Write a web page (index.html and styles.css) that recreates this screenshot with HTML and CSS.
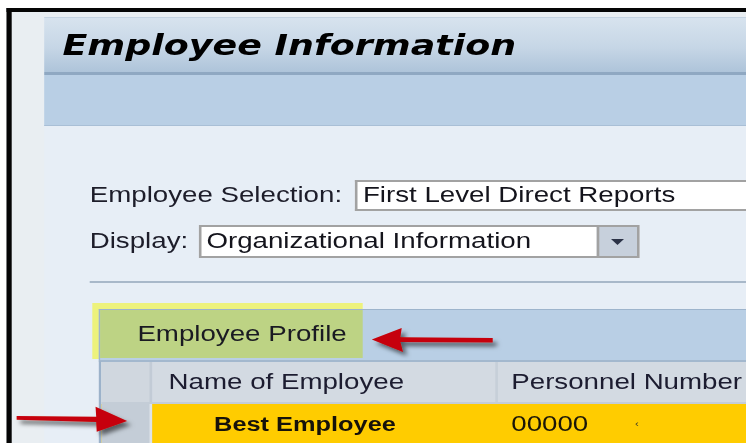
FILE: index.html
```html
<!DOCTYPE html>
<html lang="en">
<head>
<meta charset="utf-8">
<title>Employee Information</title>
<link rel="stylesheet" href="styles.css">
</head>
<body>
<div class="screen">
  <div class="frame">
    <div class="panel">
      <div class="titlebar"><h1 class="title">Employee Information</h1></div>
      <div class="toolbar"></div>
      <div class="content">
        <div class="field-row">
          <span class="label">Employee Selection:</span>
          <div class="textbox">First Level Direct Reports</div>
        </div>
        <div class="field-row row-display">
          <span class="label">Display:</span>
          <div class="dropdown">
            <span class="dropdown-value">Organizational Information</span>
            <span class="dropdown-button">
              <svg class="caret" width="10" height="6" viewBox="0 0 10 6"><polygon points="0,0 10,0 5,6"/></svg>
            </span>
          </div>
        </div>
        <div class="divider"></div>
        <section class="profile">
          <div class="highlight"></div>
          <div class="profile-bar"><span class="profile-title">Employee Profile</span></div>
          <div class="grid">
            <div class="grid-head">
              <div class="cell selector"></div>
              <div class="cell col-name">Name of Employee</div>
              <div class="cell col-number">Personnel Number</div>
            </div>
            <div class="grid-row selected">
              <div class="cell selector"></div>
              <div class="cell col-name name-value">Best Employee</div>
              <div class="cell col-number">00000<span class="trail">‹</span></div>
            </div>
          </div>
        </section>
      </div>
    </div>
  </div>
  <svg class="callouts" width="574" height="443" viewBox="0 0 574 443">
    <defs>
      <filter id="arrow-shadow" x="-20%" y="-50%" width="140%" height="250%">
        <feDropShadow dx="3" dy="4" stdDeviation="2.2" flood-color="#000" flood-opacity="0.55"/>
      </filter>
    </defs>
    <polygon class="arrow" filter="url(#arrow-shadow)"
      points="286,339.5 309,328 308,337.2 379,338 379,342.6 308,342 310,352"/>
    <polygon class="arrow" filter="url(#arrow-shadow)"
      points="12.8,416 74,416.8 73.5,406.7 97.8,421 74.4,431.7 74,422 12.8,419.8"/>
  </svg>
</div>
</body>
</html>
```
FILE: styles.css
```css
html, body {
  margin: 0;
  height: 100%;
  overflow: hidden;
  background: #ffffff;
}

/* The whole window is drawn in a narrower box and widened horizontally */
.screen {
  position: relative;
  width: 574px;
  height: 443px;
  box-sizing: border-box;
  padding: 8px 0 0 5px;
  transform: scaleX(1.3);
  transform-origin: 0 0;
  font-family: "Liberation Sans", Arial, sans-serif;
  font-size: 21.3px;
  color: #1d1d2a;
}

.frame {
  height: 100%;
  box-sizing: border-box;
  border-top: 4px solid #050505;
  border-left: 4px solid #050505;
  background: #e9eef2;
  padding: 5px 0 0 25px;
}

.panel {
  height: 100%;
  background: #e7eef6;
  display: flex;
  flex-direction: column;
}

.titlebar {
  flex: none;
  height: 54px;
  border-top: 1px solid #c4d3e2;
  border-bottom: 3px solid #8fa8c2;
  background: linear-gradient(#d7e3ee, #c6d6e6 55%, #aec4da);
  display: flex;
  align-items: center;
  padding-left: 14px;
}

.title {
  margin: 0;
  font: italic bold 28px "DejaVu Sans", Verdana, sans-serif;
  color: #000;
  white-space: nowrap;
}

.toolbar {
  flex: none;
  height: 50px;
  background: #b9cfe5;
  border-bottom: 1px solid #a9bfd6;
}

.content {
  padding: 54px 0 0 35px;
}

.field-row {
  display: flex;
  align-items: center;
  height: 31px;
}

.label {
  white-space: nowrap;
}

.textbox {
  flex: none;
  width: 330px;
  height: 31px;
  margin-left: 10px;
  box-sizing: border-box;
  border: 2px solid #a2a2a2;
  border-right: none;
  background: #fff;
  padding-left: 4px;
  display: flex;
  align-items: center;
  color: #14141c;
  white-space: nowrap;
}

.row-display {
  margin-top: 14px;
  height: 33px;
}

.dropdown {
  flex: none;
  width: 339px;
  height: 33px;
  margin-left: 8px;
  box-sizing: border-box;
  border: 2px solid #a2a2a2;
  background: #fff;
  display: flex;
}

.dropdown-value {
  flex: 1;
  padding-left: 4px;
  display: flex;
  align-items: center;
  color: #14141c;
  white-space: nowrap;
}

.dropdown-button {
  flex: none;
  width: 29px;
  border-left: 2px solid #a2a2a2;
  background: #c7d0dc;
  display: flex;
  align-items: center;
  justify-content: center;
}

.caret polygon {
  fill: #2b3246;
}

.divider {
  margin-top: 23px;
  height: 2px;
  background: #a8b8c9;
}

.profile {
  position: relative;
  margin: 26px 0 0 6.7px;
}

/* yellow marker drawn around the profile tab */
.highlight {
  position: absolute;
  left: -4.7px;
  top: -6px;
  width: 208px;
  height: 55.5px;
  background: #edf27c;
}

.profile-bar {
  position: relative;
  height: 50px;
  border-top: 1px solid #9db4cc;
  border-left: 1px solid #9db4cc;
  background: #b9cfe5;
  display: flex;
}

.profile-title {
  width: 202px;
  height: 48px;
  box-sizing: border-box;
  padding-left: 29px;
  background: #bdd384;
  display: flex;
  align-items: center;
  color: #1a1a22;
  white-space: nowrap;
}

.grid {
  border-top: 2px solid #a3b8ce;
  border-left: 2px solid #9cb2ca;
}

.grid-head,
.grid-row {
  display: flex;
  height: 40px;
}

.grid-head {
  background: #d3dae2;
  border-bottom: 2px solid #c4cdd7;
}

.cell {
  flex: none;
  box-sizing: border-box;
  display: flex;
  align-items: center;
  white-space: nowrap;
}

.selector {
  width: 39px;
  border-right: 2px solid #c2cbd6;
  background: #d0d7df;
}

.col-name {
  width: 266px;
  padding-left: 13px;
  border-right: 2px solid #c6cfd9;
}

.col-number {
  padding-left: 10.6px;
}

.grid-head .cell {
  color: #1c1c30;
}

.selected {
  background: #ffcc00;
}

.selected .selector {
  border-right: 2.5px solid #dde3ea;
  background: #c4cdd7;
}

.selected .col-name {
  border-right: none;
  padding-left: 48px;
}

.name-value {
  font-weight: bold;
  font-size: 19.5px;
  color: #16120a;
}

.selected .col-number {
  padding-left: 10.6px;
  color: #1b1608;
}

.trail {
  margin-left: 36px;
  font-size: 9px;
  color: #3a3a2a;
}

.callouts {
  position: absolute;
  left: 0;
  top: 0;
  pointer-events: none;
  overflow: visible;
}

.arrow {
  fill: #c60008;
}
```
